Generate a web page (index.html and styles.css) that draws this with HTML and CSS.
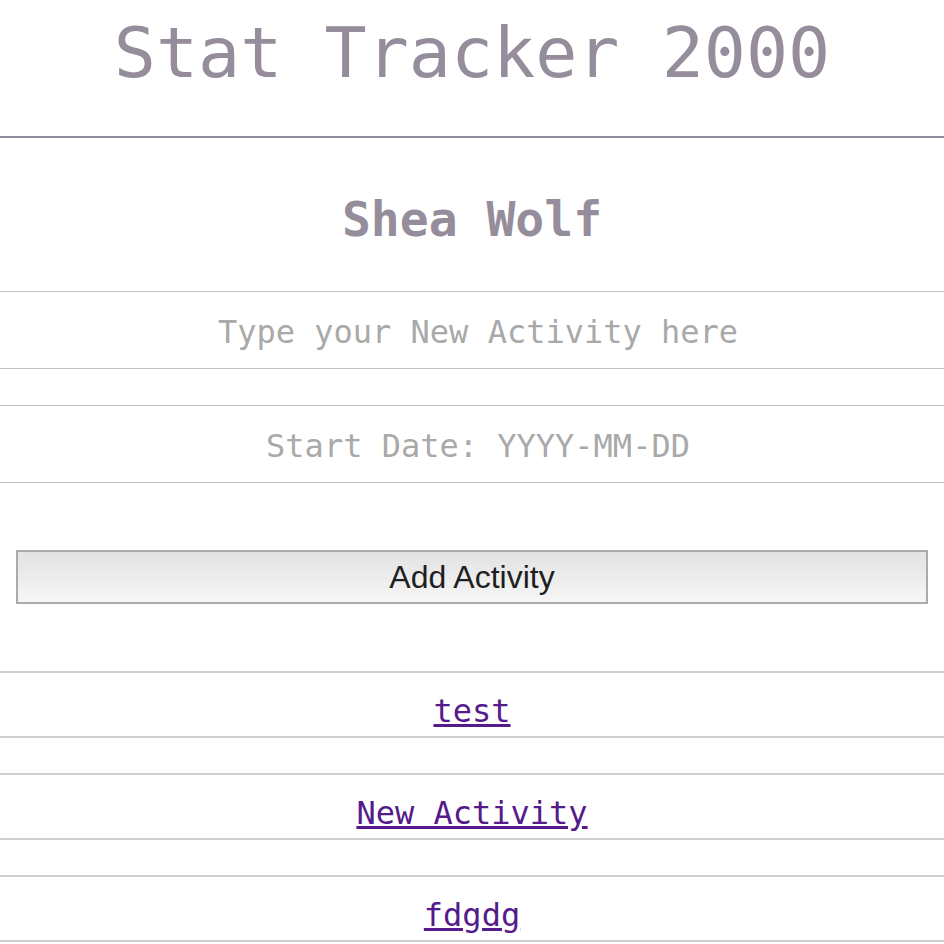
FILE: index.html
```html
<!DOCTYPE html>
<html lang="en">
<head>
  <meta charset="UTF-8">
  <title>Stat Tracker 2000</title>
  <link rel="stylesheet" href="styles.css">
</head>
<body>
  <header class="top">
    <h1>Stat Tracker 2000</h1>
  </header>

  <h2 class="user-name">Shea Wolf</h2>

  <form class="new-activity" onsubmit="return false;">
    <input class="field" type="text" placeholder="Type your New Activity here">
    <input class="field" type="text" placeholder="Start Date: YYYY-MM-DD">
    <button class="add-btn" type="submit">Add Activity</button>
  </form>

  <ul class="activity-list">
    <li><a href="#test">test</a></li>
    <li><a href="#new-activity">New Activity</a></li>
    <li><a href="#fdgdg">fdgdg</a></li>
  </ul>
</body>
</html>
```

FILE: styles.css
```css
* {
  margin: 0;
  padding: 0;
  box-sizing: border-box;
}

body {
  background: #fff;
  font-family: "DejaVu Sans Mono", "Liberation Mono", monospace;
  color: #958d9b;
}

/* Header */
.top {
  padding: 12px 0 42px;
  border-bottom: 2px solid #958d9b;
  text-align: center;
}

.top h1 {
  font-size: 70px;
  font-weight: normal;
  line-height: 82px;
}

.user-name {
  padding: 53px 0 44px;
  font-size: 48px;
  line-height: 56px;
  text-align: center;
}

/* Form */
.new-activity {
  display: flex;
  flex-direction: column;
}

.field {
  height: 78px;
  width: 100%;
  padding: 4px 0 0 12px;
  border: none;
  border-top: 1px solid #c0c0c0;
  border-bottom: 1px solid #c0c0c0;
  font-family: "DejaVu Sans Mono", monospace;
  font-size: 32px;
  text-align: center;
  color: #333;
  outline: none;
}

.field::placeholder {
  color: #a9a9a9;
}

.field + .field {
  margin-top: 36px;
}

.add-btn {
  margin: 67px 16px 0;
  height: 54px;
  border: 2px solid #ababab;
  background: linear-gradient(#e2e2e2, #f6f6f6);
  font-family: "Liberation Sans", Arial, sans-serif;
  font-size: 32px;
  color: #1e1e1e;
  cursor: pointer;
}

/* Activity list */
.activity-list {
  list-style: none;
  margin-top: 67px;
}

.activity-list li {
  height: 67px;
  border-top: 2px solid #d0d0d0;
  border-bottom: 2px solid #d0d0d0;
  display: flex;
  justify-content: center;
  align-items: center;
  padding-top: 13px;
}

.activity-list li + li {
  margin-top: 35px;
}

.activity-list a {
  font-size: 32px;
  color: #551a8b;
  text-decoration: underline;
}
```
